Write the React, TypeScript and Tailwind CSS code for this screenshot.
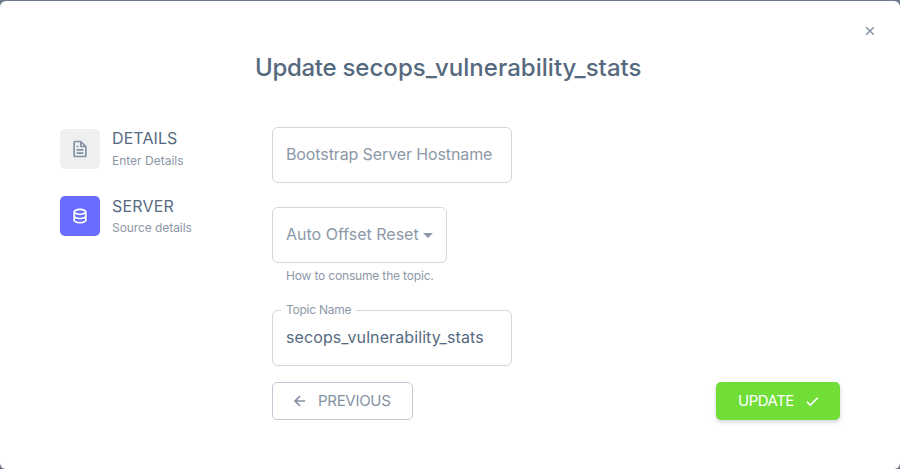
import { BiCheck, BiData, BiFile, BiLeftArrowAlt, BiX } from "react-icons/bi";
import { MdArrowDropDown } from "react-icons/md";
import type { ReactNode } from "react";

function Step({ icon, title, subtitle, active }: { icon: ReactNode; title: ReactNode; subtitle: ReactNode; active?: boolean }) {
  return (
    <div className="flex h-10 gap-3">
      <div
        className={
          active
            ? "flex size-10 shrink-0 items-center justify-center rounded-[5px] bg-[#696cff] text-white"
            : "flex size-10 shrink-0 items-center justify-center rounded-[5px] bg-[#eeeff1] text-[#8592a3]"
        }
      >
        {icon}
      </div>
      <div className="whitespace-nowrap">
        <div className={active ? "h-5 text-base leading-5 text-[#566a7f]" : "h-5 text-base leading-[18px] text-[#566a7f]"}>{title}</div>
        <div className="mt-[3px] text-xs leading-[18px] text-[#8c98a7]">{subtitle}</div>
      </div>
    </div>
  );
}

export default function App() {
  return (
    <div className="h-[469px] bg-[#6d798c] pt-px font-['Inter','Liberation_Sans',sans-serif] text-[#8c98a7]">
      <div className="relative h-[468px] rounded-md bg-white pt-[51px]">
        <button aria-label="Close" className="absolute top-[21px] right-[21px] text-[#8592a3]">
          <BiX size={18} />
        </button>
        <h1 className="ml-[255px] h-8 text-2xl leading-8 font-medium whitespace-nowrap text-[#566a7f]">
          <span className="tracking-[-0.3px]">Update </span>
          <span className="tracking-[0.03px]">secops_vulnerability_stats</span>
        </h1>
        <div className="mt-[43px] flex px-[60px]">
          <nav className="flex w-[212px] flex-col gap-[27px] pt-0.5">
            <Step
              icon={<BiFile size={20} />}
              title={<span className="tracking-[0.1px]">DETAILS</span>}
              subtitle={<span>Enter Details</span>}
            />
            <Step
              active
              icon={<BiData size={20} />}
              title={<span className="tracking-[0.2px]">SERVER</span>}
              subtitle={<span className="tracking-[-0.07px]">Source details</span>}
            />
          </nav>
          <main className="flex-1">
            <div className="flex h-14 w-60 items-center rounded-md border border-[#d4d6dc] pb-0.5 pl-[13px] text-base whitespace-nowrap">
              <span className="tracking-[-0.11px]">Bootstrap Server Hostname</span>
            </div>
            <div className="mt-6 flex h-14 w-[175px] items-center rounded-md border border-[#d4d6dc] pl-[13px] text-base whitespace-nowrap">
              <span className="w-[130px] pb-0.5">Auto Offset Reset</span>
              <MdArrowDropDown size={24} />
            </div>
            <p className="mt-1 ml-3.5 h-[18px] text-xs leading-[18px] tracking-[-0.17px] whitespace-nowrap">How to consume the topic.</p>
            <fieldset className="mt-[16px] h-[65px] w-60 rounded-md border border-[#d4d6dc] px-2 whitespace-nowrap">
              <legend className="h-[18px] w-[75px] px-[5px] text-xs leading-[18px] tracking-[-0.25px]">Topic Name</legend>
              <div className="mt-1.5 pl-[5px] text-base leading-6 tracking-[0.1px] text-[#566a7f]">secops_vulnerability_stats</div>
            </fieldset>
            <div className="mt-4 flex justify-between">
              <button className="flex h-[38px] w-[141px] items-center rounded-[5px] border border-[#c2c7d6] pl-[17px] text-[15px] text-[#8592a3]">
                <BiLeftArrowAlt size={20} />
                <span className="ml-2 tracking-[-0.3px]">PREVIOUS</span>
              </button>
              <button className="flex h-[38px] w-[124px] items-center rounded-[5px] bg-[#71dd37] pl-[22px] text-[15px] text-white shadow-[0_2px_4px_rgba(133,146,163,0.4)]">
                <span className="w-16 text-left tracking-[-0.5px]">UPDATE</span>
                <BiCheck size={20} />
              </button>
            </div>
          </main>
        </div>
      </div>
    </div>
  );
}
